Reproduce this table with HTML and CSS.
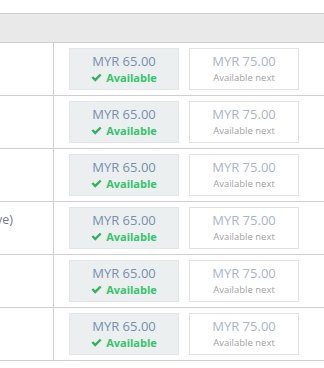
FILE: index.html
```html
<!DOCTYPE html>
<html>
<head>
<meta charset="utf-8">
<link rel="stylesheet" href="styles.css">
</head>
<body>
<div class="table">
  <div class="head"></div>
  <div class="row">
    <div class="label"></div>
    <div class="prices">
      <div class="box now"><div class="price">MYR 65.00</div><div class="status"><svg class="check" viewBox="0 0 12 10"><path d="M0.4 5.4 L2.3 3.5 L4.6 5.8 L9.7 0.7 L11.6 2.6 L4.6 9.6 Z"/></svg>Available</div></div>
      <div class="box next"><div class="price">MYR 75.00</div><div class="sub">Available next</div></div>
    </div>
  </div>
  <div class="row">
    <div class="label"></div>
    <div class="prices">
      <div class="box now"><div class="price">MYR 65.00</div><div class="status"><svg class="check" viewBox="0 0 12 10"><path d="M0.4 5.4 L2.3 3.5 L4.6 5.8 L9.7 0.7 L11.6 2.6 L4.6 9.6 Z"/></svg>Available</div></div>
      <div class="box next"><div class="price">MYR 75.00</div><div class="sub">Available next</div></div>
    </div>
  </div>
  <div class="row">
    <div class="label"></div>
    <div class="prices">
      <div class="box now"><div class="price">MYR 65.00</div><div class="status"><svg class="check" viewBox="0 0 12 10"><path d="M0.4 5.4 L2.3 3.5 L4.6 5.8 L9.7 0.7 L11.6 2.6 L4.6 9.6 Z"/></svg>Available</div></div>
      <div class="box next"><div class="price">MYR 75.00</div><div class="sub">Available next</div></div>
    </div>
  </div>
  <div class="row">
    <div class="label"><span class="label-text">(Weekend inclusive)</span></div>
    <div class="prices">
      <div class="box now"><div class="price">MYR 65.00</div><div class="status"><svg class="check" viewBox="0 0 12 10"><path d="M0.4 5.4 L2.3 3.5 L4.6 5.8 L9.7 0.7 L11.6 2.6 L4.6 9.6 Z"/></svg>Available</div></div>
      <div class="box next"><div class="price">MYR 75.00</div><div class="sub">Available next</div></div>
    </div>
  </div>
  <div class="row">
    <div class="label"></div>
    <div class="prices">
      <div class="box now"><div class="price">MYR 65.00</div><div class="status"><svg class="check" viewBox="0 0 12 10"><path d="M0.4 5.4 L2.3 3.5 L4.6 5.8 L9.7 0.7 L11.6 2.6 L4.6 9.6 Z"/></svg>Available</div></div>
      <div class="box next"><div class="price">MYR 75.00</div><div class="sub">Available next</div></div>
    </div>
  </div>
  <div class="row">
    <div class="label"></div>
    <div class="prices">
      <div class="box now"><div class="price">MYR 65.00</div><div class="status"><svg class="check" viewBox="0 0 12 10"><path d="M0.4 5.4 L2.3 3.5 L4.6 5.8 L9.7 0.7 L11.6 2.6 L4.6 9.6 Z"/></svg>Available</div></div>
      <div class="box next"><div class="price">MYR 75.00</div><div class="sub">Available next</div></div>
    </div>
  </div>
</div>
</body>
</html>
```
FILE: styles.css
```css
html, body {
  margin: 0;
  padding: 0;
  background: #fff;
  overflow: hidden;
  font-family: "Open Sans", "Liberation Sans", sans-serif;
}
.table {
  margin-top: 13px;
  width: 340px;
  border-top: 1px solid #cfcfcf;
}
.head {
  height: 28px;
  background: #e9e9e9;
  border-bottom: 1px solid #cfcfcf;
}
.row {
  display: flex;
  border-bottom: 1px solid #cfcfcf;
}
.label {
  width: 54px;
  flex: none;
  border-right: 1px solid #cfcfcf;
  display: flex;
  justify-content: flex-end;
  align-items: flex-start;
  overflow: hidden;
  padding-right: 40px;
  box-sizing: border-box;
}
.label-text {
  white-space: nowrap;
  flex: none;
  font-size: 12.5px;
  line-height: 18px;
  color: #7a7a7a;
  margin-top: 9px;
}
.prices {
  display: flex;
  gap: 10px;
  padding: 5px 0 5px 15px;
}
.box {
  width: 110px;
  height: 42px;
  box-sizing: border-box;
  text-align: center;
  padding-top: 4px;
}
.now {
  background: #ebeff0;
  border: 1px solid #e2e6e8;
}
.next {
  background: #fff;
  border: 1px solid #e2e2e2;
}
.price {
  font-size: 13px;
  line-height: 17px;
}
.now .price { color: #7690ad; }
.next .price { color: #aab6c5; }
.status {
  font-size: 11px;
  line-height: 15px;
  font-weight: 700;
  color: #35c46c;
  display: flex;
  justify-content: center;
  align-items: center;
  gap: 4px;
}
.check {
  width: 11px;
  height: 9px;
  fill: #33b25e;
}
.sub {
  font-size: 9.5px;
  line-height: 15px;
  color: #a3a3a3;
}
```
